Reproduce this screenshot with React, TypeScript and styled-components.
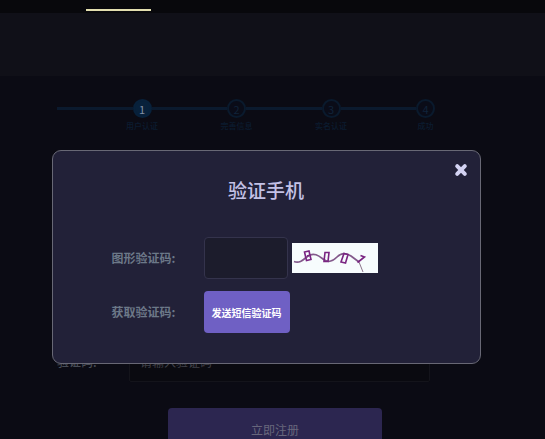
import React from "react";
import styled, { createGlobalStyle } from "styled-components";

const GlobalStyle = createGlobalStyle`
  *, *::before, *::after { box-sizing: border-box; }
  body {
    margin: 0;
    background: #0b0b14;
    font-family: "Noto Sans CJK SC", sans-serif;
    font-size: 12px;
  }
  button, input { font-family: inherit; margin: 0; }
`;

const Page = styled.div`
  height: 100vh;
  overflow: hidden;
`;

const TopBar = styled.nav`
  display: flex;
  align-items: flex-end;
  height: 13px;
  padding: 0 0 2px 86px;
  background: #08080c;
`;

const ActiveTab = styled.a`
  width: 65px;
  height: 2px;
  background: #e3dfb0;
`;

const Banner = styled.header`
  height: 63px;
  background: #101018;
`;

const Content = styled.main`
  padding: 23px 16px 0 57px;
`;

const Stepper = styled.ol`
  display: flex;
  max-width: 378px;
  margin: 0;
  padding: 0;
  list-style: none;
`;

const StepItem = styled.li`
  display: flex;
  flex: 1;
`;

const StepLine = styled.span`
  flex: 1;
  height: 3px;
  margin-top: 8px;
  background: #0b1a2e;
`;

const StepMark = styled.div`
  display: flex;
  flex-direction: column;
  align-items: center;
  width: 19px;
`;

const StepNumber = styled.span<{ $active: boolean }>`
  display: flex;
  align-items: center;
  justify-content: center;
  width: 19px;
  height: 19px;
  border: 2px solid ${(p) => (p.$active ? "#08213b" : "#0a1a2d")};
  border-radius: 50%;
  background: ${(p) => (p.$active ? "#08213b" : "#0a0c18")};
  color: ${(p) => (p.$active ? "#8290a6" : "#10233a")};
  font-size: 11px;
  line-height: 12px;
`;

const StepLabel = styled.span`
  margin-top: 2px;
  color: #0b1c30;
  font-size: 8px;
  font-weight: 500;
  line-height: 12px;
  white-space: nowrap;
`;

const RegisterForm = styled.form`
  max-width: 373px;
  margin-top: 208px;
`;

const RegisterRow = styled.div`
  display: flex;
  align-items: center;
`;

const RegisterLabel = styled.label`
  width: 72px;
  color: #484c56;
  font-weight: 500;
`;

const RegisterInput = styled.input`
  flex: 1;
  min-width: 0;
  height: 42px;
  padding: 0 10px;
  border: 1px solid #14141b;
  border-radius: 2px;
  background: #0a0a10;
  color: #8a8a94;
  font-size: 12px;
  &::placeholder { color: #414149; opacity: 1; }
`;

const RegisterButton = styled.button`
  display: block;
  width: 214px;
  height: 42px;
  margin: 26px 0 0 111px;
  padding: 0;
  border: 0;
  border-radius: 4px;
  background: #2c2650;
  color: #68667c;
  font-size: 12px;
`;

const Overlay = styled.div`
  position: fixed;
  inset: 0;
  display: flex;
  align-items: flex-start;
  justify-content: center;
  padding: 150px 29px 0 16px;
`;

const Dialog = styled.section`
  position: relative;
  width: 100%;
  max-width: 429px;
  padding: 24px 16px 30px;
  border: 1px solid #686875;
  border-radius: 9px;
  background: #222138;
`;

const CloseButton = styled.button`
  position: absolute;
  top: 12px;
  right: 12px;
  display: flex;
  padding: 0;
  border: 0;
  background: none;
  cursor: pointer;
`;

const Title = styled.h2`
  margin: 0 0 32px;
  color: #c3c1e6;
  font-size: 19px;
  font-weight: 500;
  line-height: 30px;
  text-align: center;
`;

const Fields = styled.form`
  display: grid;
  gap: 12px;
  padding-left: 43px;
`;

const Field = styled.div`
  display: flex;
  align-items: center;
`;

const FieldLabel = styled.label`
  width: 92px;
  padding-bottom: 2px;
  color: #6c7888;
  font-weight: 700;
`;

const CodeInput = styled.input`
  width: 84px;
  height: 42px;
  margin-right: 4px;
  padding: 0 8px;
  border: 1px solid #34334c;
  border-radius: 4px;
  background: #1c1c2c;
  color: #c3c1e6;
  font-size: 12px;
`;

const CaptchaButton = styled.button`
  display: flex;
  padding: 0;
  border: 0;
  background: #f7fcfd;
  cursor: pointer;
`;

const SendButton = styled.button`
  width: 86px;
  height: 42px;
  padding: 0;
  border: 0;
  border-radius: 4px;
  background: #6f60c4;
  color: #fff;
  font-size: 10px;
  font-weight: 700;
  white-space: nowrap;
  cursor: pointer;
`;

const steps = ["用户认证", "完善信息", "实名认证", "成功"];

function Captcha() {
  return (
    <svg width="86" height="30" viewBox="0 0 86 30" fill="none">
      <path
        d="M2 18.5C8 21 12 16 16 13C22 9 27 13 31 16C36 20 40 19 45 14C49 10 53 9 59 13L67 19"
        stroke="#83598b"
        strokeWidth="1.7"
      />
      <path d="M67 19L71 29" stroke="#8a7389" strokeWidth="1" />
      <g stroke="#7a2582" strokeWidth="1.6">
        <path d="M12.5 9L17 8L19 16.5L14.5 17.5ZM15 13L17 12.5" />
        <path d="M33 9.5H37L36 18.5H32Z" />
        <path d="M52 10.5L56 11.5L53.5 20L49 19Z" />
        <path d="M68.5 12.5L72.5 14L65.5 19.5" />
      </g>
    </svg>
  );
}

export default function App() {
  return (
    <div lang="zh-CN">
      <GlobalStyle />
      <Page>
        <TopBar>
          <ActiveTab href="#register" aria-label="注册" />
        </TopBar>
        <Banner />
        <Content>
          <Stepper>
            {steps.map((label, i) => (
              <StepItem key={label}>
                <StepLine />
                <StepMark>
                  <StepNumber $active={i === 0}>{i + 1}</StepNumber>
                  <StepLabel>{label}</StepLabel>
                </StepMark>
              </StepItem>
            ))}
          </Stepper>
          <RegisterForm>
            <RegisterRow>
              <RegisterLabel htmlFor="register-code">验证码:</RegisterLabel>
              <RegisterInput id="register-code" placeholder="请输入验证码" />
            </RegisterRow>
            <RegisterButton type="button">立即注册</RegisterButton>
          </RegisterForm>
        </Content>
      </Page>
      <Overlay>
        <Dialog role="dialog" aria-modal="true" aria-labelledby="dialog-title">
          <CloseButton type="button" aria-label="关闭">
            <svg width="14" height="14" viewBox="0 0 14 14">
              <path
                d="M3.2 3.2L10.8 10.8M10.8 3.2L3.2 10.8"
                stroke="#d3d2f2"
                strokeWidth="4"
                strokeLinecap="round"
              />
            </svg>
          </CloseButton>
          <Title id="dialog-title">验证手机</Title>
          <Fields>
            <Field>
              <FieldLabel htmlFor="captcha">图形验证码:</FieldLabel>
              <CodeInput id="captcha" />
              <CaptchaButton type="button" aria-label="刷新图形验证码">
                <Captcha />
              </CaptchaButton>
            </Field>
            <Field>
              <FieldLabel htmlFor="send-code">获取验证码:</FieldLabel>
              <SendButton id="send-code" type="button">发送短信验证码</SendButton>
            </Field>
          </Fields>
        </Dialog>
      </Overlay>
    </div>
  );
}
